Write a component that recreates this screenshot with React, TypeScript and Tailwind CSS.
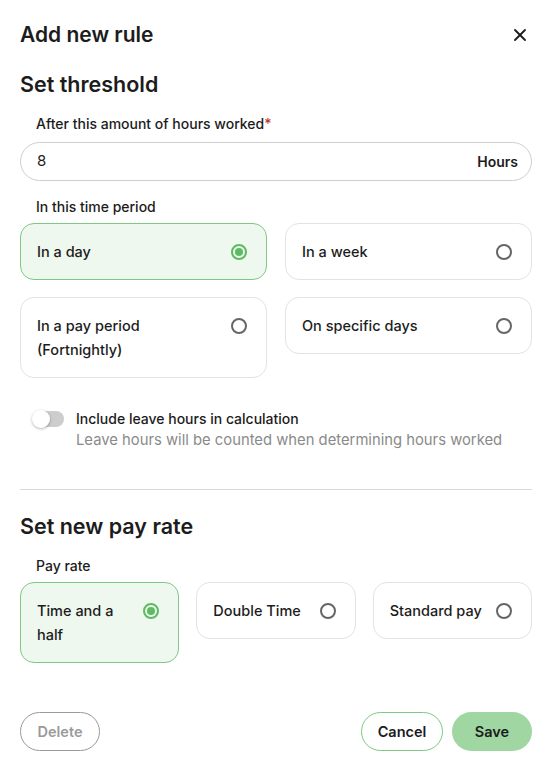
import { X } from "lucide-react";

const periods = [
  { id: "day", label: "In a day" },
  { id: "week", label: "In a week" },
  { id: "pay", label: "In a pay period (Fortnightly)" },
  { id: "specific", label: "On specific days" },
];

const rates = [
  { id: "half", label: "Time and a half" },
  { id: "double", label: "Double Time" },
  { id: "standard", label: "Standard pay" },
];

function Radio({ checked }: { checked: boolean }) {
  return (
    <span
      className={`shrink-0 w-4 h-4 rounded-full border-2 flex items-center justify-center mt-1 ${
        checked ? "border-[#5cbb63]" : "border-[#666]"
      }`}
    >
      {checked && <span className="w-2 h-2 rounded-full bg-[#5cbb63]" />}
    </span>
  );
}

function OptionCard({ label, checked }: { label: string; checked: boolean }) {
  return (
    <div
      className={`flex items-start justify-between gap-3 rounded-[14px] border pl-[16px] pr-[19px] py-[15.5px] text-[14.5px] leading-6 font-medium ${
        checked ? "bg-[#eff8ef] border-[#7fc884]" : "bg-white border-[#e3e3e3]"
      }`}
    >
      <span>{label}</span>
      <Radio checked={checked} />
    </div>
  );
}

export default function App() {
  return (
    <div
      className="w-[552px] h-[776px] bg-white px-5 text-[#1c1c1c]"
      style={{ fontFamily: "Inter, 'Noto Sans', sans-serif" }}
    >
      <div className="flex items-center justify-between h-7 mt-[21px]">
        <h1 className="text-[21px] font-semibold leading-7">Add new rule</h1>
        <X className="w-5 h-5 mr-[2px]" strokeWidth={2.2} />
      </div>

      <h2 className="mt-[21px] text-[21.5px] font-semibold leading-7">Set threshold</h2>

      <div className="mt-4 px-4 text-[14px] leading-5 font-medium">
        After this amount of hours worked<span className="text-[#c0392b]">*</span>
      </div>
      <div className="mt-2 h-[39px] rounded-full border border-[#cfcfcf] flex items-center justify-between pl-4 pr-[13px]">
        <span className="text-[15px]">8</span>
        <span className="text-[14px] font-semibold">Hours</span>
      </div>

      <div className="mt-4 px-4 text-[14px] leading-5 font-medium">In this time period</div>
      <div className="mt-[6px] grid grid-cols-2 gap-x-[18px] gap-y-[17px] items-start">
        {periods.map((p) => (
          <OptionCard key={p.id} label={p.label} checked={p.id === "day"} />
        ))}
      </div>

      <div className="mt-[31px] flex items-start gap-3 pl-3">
        <div className="relative w-[32px] h-[16px] mt-[2px] shrink-0">
          <div className="absolute left-[2px] right-0 top-0 bottom-0 rounded-full bg-[#cdcdcd]" />
          <div className="absolute left-0 top-[-1px] w-[18px] h-[18px] rounded-full bg-white shadow-[0_1px_3px_rgba(0,0,0,0.3)]" />
        </div>
        <div>
          <div className="text-[14px] leading-5 font-medium">Include leave hours in calculation</div>
          <div className="text-[14.8px] leading-[23px] text-[#8a8a8a]">
            Leave hours will be counted when determining hours worked
          </div>
        </div>
      </div>

      <div className="mt-[37px] h-px bg-[#dadada]" />

      <h2 className="mt-[22px] text-[21.5px] font-semibold leading-7">Set new pay rate</h2>

      <div className="mt-4 px-4 text-[14px] leading-5 font-medium">Pay rate</div>
      <div className="mt-[6px] grid grid-cols-3 gap-x-[17px] items-start">
        {rates.map((r) => (
          <OptionCard key={r.id} label={r.label} checked={r.id === "half"} />
        ))}
      </div>

      <div className="mt-[49px] flex items-center justify-between">
        <button className="h-[39px] w-[80px] rounded-full border border-[#9a9a9a] text-[#9a9a9a] text-[14.5px] font-semibold">
          Delete
        </button>
        <div className="flex gap-[9px]">
          <button className="h-[39px] w-[82px] rounded-full border border-[#7fc884] bg-white text-[14.5px] font-semibold">
            Cancel
          </button>
          <button className="h-[39px] w-[80px] rounded-full bg-[#9fd6a2] text-[14.5px] font-semibold">
            Save
          </button>
        </div>
      </div>
    </div>
  );
}
